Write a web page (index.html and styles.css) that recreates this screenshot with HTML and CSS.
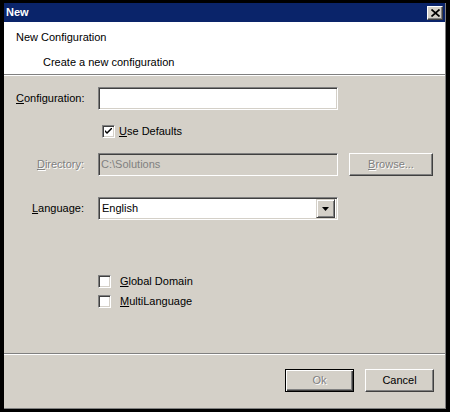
FILE: index.html
```html
<!DOCTYPE html>
<html>
<head>
<meta charset="utf-8">
<link rel="stylesheet" href="styles.css">
</head>
<body>
<div class="window">
  <div class="inner">
    <div class="titlebar">
      <span class="title">New</span>
      <span class="close"><svg width="9" height="8" viewBox="0 0 9 8"><path d="M0.5 0.5 L8.5 7.5 M8.5 0.5 L0.5 7.5" stroke="#000" stroke-width="1.7" fill="none"/></svg></span>
    </div>
    <div class="header">
      <div class="h1">New Configuration</div>
      <div class="h2">Create a new configuration</div>
    </div>
    <div class="body">
      <div class="row r-config">
        <label class="lbl"><u>C</u>onfiguration:</label>
        <div class="field"></div>
      </div>
      <div class="row r-use">
        <span class="cb"><svg width="7" height="7" viewBox="0 0 7 7"><path d="M0 2 L0 4 L2 6 L7 1 L7 -1 L2 4 Z" fill="#000"/></svg></span>
        <span class="cbtext"><u>U</u>se Defaults</span>
      </div>
      <div class="row r-dir">
        <label class="lbl disabled"><u>D</u>irectory:</label>
        <div class="field off">C:\Solutions</div>
        <div class="btn browse disabled"><span><u>B</u>rowse...</span></div>
      </div>
      <div class="row r-lang">
        <label class="lbl"><u>L</u>anguage:</label>
        <div class="field select">
          <span class="val">English</span>
          <span class="drop"><svg width="7" height="4" viewBox="0 0 7 4"><path d="M0 0 L7 0 L3.5 4 Z" fill="#000"/></svg></span>
        </div>
      </div>
      <div class="row r-global">
        <span class="cb"></span>
        <span class="cbtext2"><u>G</u>lobal Domain</span>
      </div>
      <div class="row r-multi">
        <span class="cb"></span>
        <span class="cbtext2"><u>M</u>ultiLanguage</span>
      </div>
      <div class="footer">
        <div class="sep"></div>
        <div class="buttons">
          <div class="btn default disabled"><span>Ok</span></div>
          <div class="btn"><span>Cancel</span></div>
        </div>
      </div>
    </div>
  </div>
</div>
</body>
</html>
```

FILE: styles.css
```css
html, body {
  margin: 0;
  padding: 0;
  background: #000;
}
body {
  font-family: "Liberation Sans", Arial, sans-serif;
  font-size: 11px;
  line-height: 13px;
  color: #000;
}
.window {
  width: 450px;
  height: 412px;
  box-sizing: border-box;
  padding: 3px 4px 3px 4px;
  background: #000;
}
.inner {
  height: 100%;
  box-sizing: border-box;
  display: flex;
  flex-direction: column;
  background: #d4d0c8;
  border-right: 1px solid #808080;
  border-bottom: 1px solid #808080;
}
.titlebar {
  height: 19px;
  background: #0a246a;
  display: flex;
  align-items: center;
  justify-content: space-between;
  padding: 0 2px 0 2px;
}
.title {
  color: #fff;
  font-weight: bold;
  font-size: 11px;
}
.close {
  width: 16px;
  height: 14px;
  box-sizing: border-box;
  background: #d4d0c8;
  border: 1px solid;
  border-color: #fff #404040 #404040 #fff;
  box-shadow: inset -1px -1px #808080;
  display: flex;
  align-items: center;
  justify-content: center;
}
.header {
  height: 53px;
  box-sizing: border-box;
  background: #fff;
  border-bottom: 1px solid #808080;
  padding-top: 9px;
}
.h1 {
  padding-left: 12px;
}
.h2 {
  padding-left: 39px;
  margin-top: 12px;
}
.body {
  flex: 1;
  display: flex;
  flex-direction: column;
  border-top: 1px solid #fff;
}
.row {
  display: flex;
  align-items: center;
}
.lbl {
  width: 68px;
  margin-left: 12px;
  margin-right: 14px;
  text-align: right;
}
.lbl.disabled {
  color: #808080;
  text-shadow: 1px 1px 0 #fff;
}
.field {
  width: 240px;
  height: 23px;
  box-sizing: border-box;
  background: #fff;
  border: 1px solid;
  border-color: #808080 #fff #fff #808080;
  box-shadow: inset 1px 1px #404040, inset -1px -1px #d4d0c8;
  padding-left: 2px;
  display: flex;
  align-items: center;
}
.field.off {
  background: #d4d0c8;
  color: #808080;
}
.field.select {
  justify-content: space-between;
  padding-right: 2px;
  padding-left: 3px;
}
.drop {
  width: 19px;
  height: 19px;
  box-sizing: border-box;
  background: #d4d0c8;
  border: 1px solid;
  border-color: #d4d0c8 #404040 #404040 #d4d0c8;
  box-shadow: inset 1px 1px #fff, inset -1px -1px #808080;
  display: flex;
  align-items: center;
  justify-content: center;
}
.r-config {
  margin-top: 11px;
  height: 23px;
}
.r-use {
  margin-top: 15px;
  height: 13px;
  padding-left: 98px;
}
.r-dir {
  margin-top: 15px;
  height: 23px;
}
.r-lang {
  margin-top: 21px;
  height: 23px;
}
.r-global {
  margin-top: 55px;
  height: 13px;
  padding-left: 94px;
}
.r-multi {
  margin-top: 7px;
  height: 13px;
  padding-left: 94px;
}
.cb {
  width: 13px;
  height: 13px;
  box-sizing: border-box;
  background: #fff;
  border: 1px solid;
  border-color: #808080 #fff #fff #808080;
  box-shadow: inset 1px 1px #404040, inset -1px -1px #d4d0c8;
  display: flex;
  align-items: center;
  justify-content: center;
}
.cbtext {
  margin-left: 4px;
}
.cbtext2 {
  margin-left: 9px;
}
.btn {
  height: 23px;
  box-sizing: border-box;
  background: #d4d0c8;
  border: 1px solid;
  border-color: #fff #404040 #404040 #fff;
  box-shadow: inset -1px -1px #808080;
  display: flex;
  align-items: center;
  justify-content: center;
}
.btn.disabled span {
  color: #808080;
  text-shadow: 1px 1px 0 #fff;
}
.browse {
  width: 84px;
  margin-left: 11px;
}
.footer {
  margin-top: auto;
}
.sep {
  border-top: 1px solid #808080;
  border-bottom: 1px solid #fff;
}
.buttons {
  display: flex;
  justify-content: flex-end;
  gap: 11px;
  padding: 14px 11px 16px 0;
}
.buttons .btn {
  width: 69px;
}
.btn.default {
  border: 1px solid #000;
  box-shadow: inset 1px 1px #fff, inset -1px -1px #404040, inset -2px -2px #808080;
}
```
